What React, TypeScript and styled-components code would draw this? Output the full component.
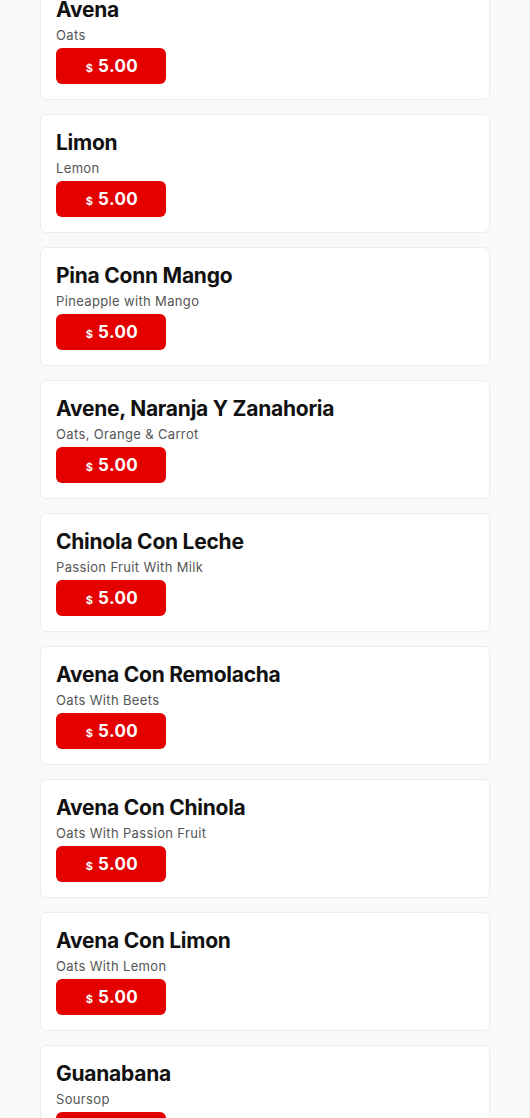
import React from "react";
import styled, { createGlobalStyle } from "styled-components";

const Global = createGlobalStyle`
  html, body { margin: 0; padding: 0; background: #f9f9f9; }
  body { font-family: "Inter", "Lato", sans-serif; }
`;

const List = styled.div`
  display: flex;
  flex-direction: column;
  gap: 14px;
  padding: 0 40px;
  margin-top: -19px;
`;

const Card = styled.div`
  background: #fff;
  border: 1px solid #ececec;
  border-radius: 6px;
  padding: 14px 15px 15px;
  display: flex;
  flex-direction: column;
  align-items: flex-start;
`;

const Title = styled.div`
  font-size: 21px;
  font-weight: 700;
  line-height: 28px;
  color: #111;
  letter-spacing: -0.25px;
`;

const Sub = styled.div`
  font-size: 13px;
  line-height: 20px;
  color: #555;
  margin-top: 1px;
  letter-spacing: 0.35px;
`;

const PriceButton = styled.button`
  margin-top: 3px;
  width: 110px;
  height: 36px;
  border: none;
  border-radius: 6px;
  background: #e50000;
  color: #fff;
  display: flex;
  align-items: center;
  justify-content: center;
  gap: 5px;
  font-family: inherit;
  cursor: pointer;
  padding: 0 0 0 2px;
`;

const Cur = styled.span`
  font-size: 11px;
  font-weight: 700;
  margin-top: 3px;
`;

const Amt = styled.span`
  font-size: 17px;
  font-weight: 700;
  letter-spacing: 0.4px;
`;

const items = [
  ["Avena", "Oats"],
  ["Limon", "Lemon"],
  ["Pina Conn Mango", "Pineapple with Mango"],
  ["Avene, Naranja Y Zanahoria", "Oats, Orange & Carrot"],
  ["Chinola Con Leche", "Passion Fruit With Milk"],
  ["Avena Con Remolacha", "Oats With Beets"],
  ["Avena Con Chinola", "Oats With Passion Fruit"],
  ["Avena Con Limon", "Oats With Lemon"],
  ["Guanabana", "Soursop"],
];

export default function App() {
  return (
    <>
      <Global />
      <List>
        {items.map(([t, s]) => (
          <Card key={t}>
            <Title>{t}</Title>
            <Sub>{s}</Sub>
            <PriceButton>
              <Cur>$</Cur>
              <Amt>5.00</Amt>
            </PriceButton>
          </Card>
        ))}
      </List>
    </>
  );
}
